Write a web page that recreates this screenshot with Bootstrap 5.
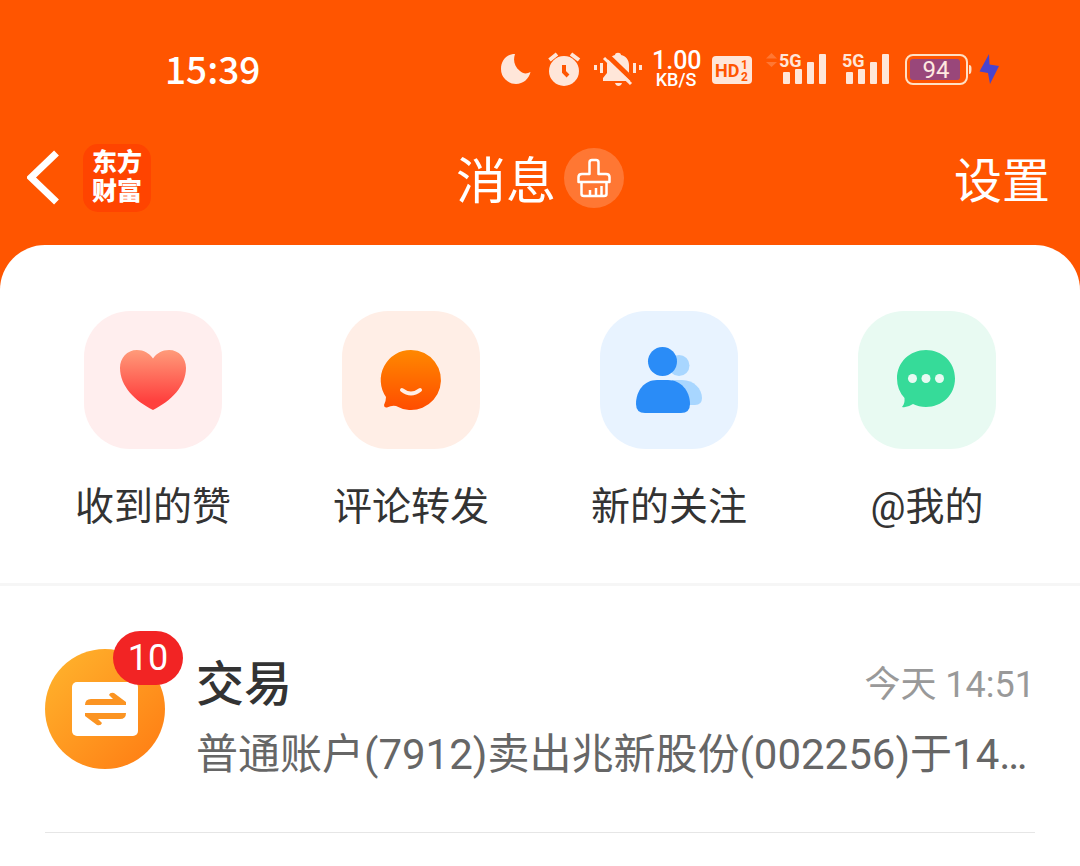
<!DOCTYPE html>
<html lang="zh-CN">
<head>
<meta charset="utf-8">
<meta name="viewport" content="width=device-width, initial-scale=1">
<title>消息</title>
<link href="https://cdn.jsdelivr.net/npm/bootstrap@5.3.0/dist/css/bootstrap.min.css" rel="stylesheet">
<style>
  body { background: #ff5500; color: #333; font-family: Roboto, "Noto Sans CJK SC", sans-serif; }
  svg { display: block; flex: none; }
  svg text { font-family: Roboto, sans-serif; }

  .status-bar { height: 140px; padding: 0 80px 0 165px; color: #fff; }
  .clock { font: 500 37px/48px "Noto Sans CJK SC", sans-serif; padding-bottom: 4px; }
  .status-icons { gap: 10px; }
  .net-speed { width: 48px; font-weight: 500; text-align: center; white-space: nowrap; }
  .net-rate { font-size: 25px; line-height: 20px; }
  .net-unit { font-size: 18px; line-height: 18px; }

  .title-bar { display: grid; grid-template-columns: 1fr auto 1fr; align-items: center; height: 105px; padding: 0 27px 30px; }
  .title-bar, .title-bar a { color: #fff; }
  .brand-tile { width: 68px; height: 68px; border-radius: 15px; background: #ff4400; font-size: 25px; line-height: 29px; font-weight: 900; text-align: center; padding-top: 4px; }
  .page-title { font-size: 50px; line-height: 64px; font-weight: 400; padding-top: 8px; }
  .clean-btn { width: 60px; height: 60px; background: #ff7733; }
  .settings { font-size: 48px; line-height: 64px; padding: 8px 3px 0 0; }

  .panel { border-radius: 45px 45px 0 0; }
  .shortcuts { padding: 66px 24px 48px; border-bottom: 3px solid #f6f6f6; }
  .shortcuts a { color: #333; font-size: 39px; line-height: 56px; gap: 30px; }
  .tile { width: 138px; height: 138px; border-radius: 46px; }
  .tile-like { background: #ffeeee; }
  .tile-comment { background: #ffeee6; }
  .tile-follow { background: #e8f3ff; }
  .tile-mention { background: #e8faf2; }

  .message { margin: 0 45px; padding: 63px 0 45px; gap: 31px; border-bottom: 1px solid #e6e6e6; color: #666; }
  .message-text { padding-top: 4px; }
  .count { left: 68px; top: -18px; width: 70px; height: 54px; background: #f22424; font-size: 36px; line-height: 54px; }
  .sender { font-size: 48px; line-height: 64px; font-weight: 500; color: #333; }
  .sent-at { font-size: 36px; line-height: 64px; color: #999; }
  .preview { font-size: 42px; line-height: 64px; margin-top: 6px; }
</style>
</head>
<body class="d-flex flex-column min-vh-100">

<div class="status-bar d-flex align-items-center justify-content-between">
  <div class="clock">15:39</div>
  <div class="status-icons d-flex align-items-center">
    <svg width="38" height="40" viewBox="500 50 38 40" fill="#ffe6d9"><path d="M515 54C506 54 501 61 501 69A15 15 0 0 0 516 84C523 84 529 79 530.500 72C527 74 523 74 520 71C514 66 513 60 515 54Z"/></svg>
    <svg width="36" height="40" viewBox="548 50 36 40"><circle cx="564" cy="71" r="15" fill="#ffe6d9"/><path d="M549.500 60L557 54M571 54L579 60" stroke="#ffe6d9" stroke-width="4"/><path d="M564 65V72L568 76" fill="none" stroke="#ff5500" stroke-width="4"/></svg>
    <svg width="48" height="40" viewBox="594 50 48 40"><path d="M603 81V78L607 73V65C607 59 611 56 615 55C615 52 621 52 621 55C626 56 629 60 629 65V73L633 78V81ZM615 83H622C621 87 616 87 615 83Z" fill="#ffe6d9"/><path d="M606 54L635 82" stroke="#ff5500" stroke-width="5"/><path d="M604 58L631 84" stroke="#ffe6d9" stroke-width="3"/><path d="M595.500 65V70M601.500 63V73M634.500 63V73M640.500 65V70" stroke="#ffe6d9" stroke-width="3"/></svg>
    <div class="net-speed"><div class="net-rate">1.00</div><div class="net-unit">KB/S</div></div>
    <svg width="46" height="40" viewBox="710 50 46 40"><rect x="712" y="56" width="40" height="28" rx="4" fill="#ffe6d9"/><g fill="#ff5500" font-weight="700"><text x="715" y="77" font-size="18">HD</text><text x="741" y="69" font-size="12">1</text><text x="741" y="81" font-size="12">2</text></g></svg>
    <svg width="62" height="40" viewBox="766 50 62 40"><path d="M766 58.500L771.500 53L777 58.500ZM766 62L771.500 67L777 62Z" fill="#ff7733"/><g fill="#ffe6d9"><text x="779" y="67" font-size="18" font-weight="700">5G</text><rect x="783" y="72" width="7" height="12" rx="1"/><rect x="795" y="69" width="7" height="15" rx="1"/><rect x="807" y="62" width="7" height="22" rx="1"/><rect x="819" y="54" width="7" height="30" rx="1"/></g></svg>
    <svg width="54" height="40" viewBox="838 50 54 40"><g fill="#ffe6d9"><text x="842" y="67" font-size="18" font-weight="700">5G</text><rect x="846" y="72" width="7" height="12" rx="1"/><rect x="858" y="69" width="7" height="15" rx="1"/><rect x="870" y="62" width="7" height="22" rx="1"/><rect x="882" y="54" width="7" height="30" rx="1"/></g></svg>
    <svg width="98" height="40" viewBox="902 50 98 40"><rect x="906" y="55" width="61" height="29" rx="7" fill="none" stroke="#ffe0c4" stroke-width="2"/><rect x="910" y="59" width="50" height="21" rx="3" fill="#99477a"/><path d="M969 65C971 65 971.500 66 971.500 69S971 74 969 74Z" fill="#ffe0c4"/><text x="936" y="78" font-size="24" fill="#ffe9e0" text-anchor="middle">94</text><path d="M989 54L979.500 71.500L988 73L990 84L999 66L989.500 64.500Z" fill="#4a44cc"/></svg>
  </div>
</div>

<header class="title-bar">
  <div class="d-flex align-items-center">
    <a href="#" aria-label="返回"><svg width="56" height="56" viewBox="27 150 56 56"><path d="M56.500 153L31 177.500L56.500 202" fill="none" stroke="#fff" stroke-width="7"/></svg></a>
    <a href="#" class="brand-tile text-decoration-none">东方<br>财富</a>
  </div>
  <div class="d-flex align-items-center gap-2">
    <h1 class="page-title m-0">消息</h1>
    <button type="button" class="clean-btn btn rounded-circle border-0 p-0" aria-label="清除未读">
      <svg width="60" height="60" viewBox="0 0 60 60" fill="none" stroke="#fff" stroke-width="2.500" stroke-linejoin="round"><path d="M25.500 26V14.500Q25.500 12 28 12H32Q34.500 12 34.500 14.500V26H42Q45.500 26 45.500 29V34H14.500V29Q14.500 26 18 26ZM17.500 34V46Q17.500 48 20 48H40Q42.500 48 42.500 46V34M26 47V42M32 47V40M37.500 47V38"/></svg>
    </button>
  </div>
  <a href="#" class="settings text-decoration-none ms-auto">设置</a>
</header>

<main class="panel bg-white flex-grow-1">
  <nav class="shortcuts row g-0">
    <a href="#" class="col d-flex flex-column align-items-center text-decoration-none">
      <svg class="tile tile-like" viewBox="0 0 138 138"><defs><linearGradient id="likeFill" x1="0" y1="0" x2="0" y2="1"><stop offset="0" stop-color="#ff9b7a"/><stop offset=".85" stop-color="#ff403e"/></linearGradient></defs><path d="M69 47.500C65 42 60 39 53 39C43 39 36 47 36 57C36 75 51 90 69 99C87 90 102 75 102 57C102 47 95 39 85 39C78 39 73 42 69 47.500Z" fill="url(#likeFill)"/></svg>
      收到的赞
    </a>
    <a href="#" class="col d-flex flex-column align-items-center text-decoration-none">
      <svg class="tile tile-comment" viewBox="0 0 138 138"><defs><linearGradient id="commentFill" x1="0" y1="0" x2="0" y2="1"><stop offset="0" stop-color="#ff8800"/><stop offset="1" stop-color="#ff4d00"/></linearGradient></defs><path d="M69 39A30 30 0 1 1 54 95Q50 94 45 96.500Q42 97 42 94Q44 90 44 86A30 30 0 0 1 69 39Z" fill="url(#commentFill)"/><path d="M60 79Q69 86 78 79" fill="none" stroke="#ffeee6" stroke-width="4" stroke-linecap="round"/></svg>
      评论转发
    </a>
    <a href="#" class="col d-flex flex-column align-items-center text-decoration-none">
      <svg class="tile tile-follow" viewBox="0 0 138 138"><g fill="#a8d6ff"><circle cx="79" cy="54.500" r="10.500"/><path d="M72 69H82C94 69 102 78 102 87Q102 94 95 94H72Z"/></g><g fill="#2a8cf7"><circle cx="62.500" cy="50.500" r="14.500"/><path d="M57 69H68C81 69 90 80 90 93Q90 102 81 102H45Q36 102 36 93C36 80 44 69 57 69Z"/></g></svg>
      新的关注
    </a>
    <a href="#" class="col d-flex flex-column align-items-center text-decoration-none">
      <svg class="tile tile-mention" viewBox="0 0 138 138"><path d="M68 39C84 39 97 51 97 67.500S84 96 68 96C63 96 59 95 55 93Q49 97 44 96Q47 93 46.500 87Q39 79 39 67.500C39 51 52 39 68 39Z" fill="#36db99"/><g fill="#e8faf2"><circle cx="54.500" cy="67.500" r="4.500"/><circle cx="68" cy="67.500" r="4.500"/><circle cx="81.500" cy="67.500" r="4.500"/></g></svg>
      @我的
    </a>
  </nav>

  <article class="message d-flex align-items-start">
    <div class="position-relative">
      <svg width="120" height="120" viewBox="0 0 120 120"><defs><linearGradient id="tradeFill" x1=".1" y1=".1" x2=".9" y2=".9"><stop offset="0" stop-color="#ffb02b"/><stop offset="1" stop-color="#ff8015"/></linearGradient></defs><circle cx="60" cy="60" r="60" fill="url(#tradeFill)"/><rect x="27" y="33" width="66" height="54" rx="5" fill="#fff"/><g fill="#fb9422"><path d="M40 56Q40 50 46 50H68L64 46Q65 43 69 44L81 53V56Z"/><path d="M81 64Q81 70 75 70H53L57 74Q56 77 52 76L40 67V64Z"/></g></svg>
      <span class="count badge rounded-pill position-absolute p-0 fw-normal">10</span>
    </div>
    <div class="message-text flex-grow-1 overflow-hidden">
      <div class="d-flex justify-content-between">
        <h2 class="sender m-0">交易</h2>
        <time class="sent-at">今天 14:51</time>
      </div>
      <p class="preview text-nowrap mb-0">普通账户(7912)卖出兆新股份(002256)于14…</p>
    </div>
  </article>
</main>

<script src="https://cdn.jsdelivr.net/npm/bootstrap@5.3.0/dist/js/bootstrap.bundle.min.js"></script>
</body>
</html>
